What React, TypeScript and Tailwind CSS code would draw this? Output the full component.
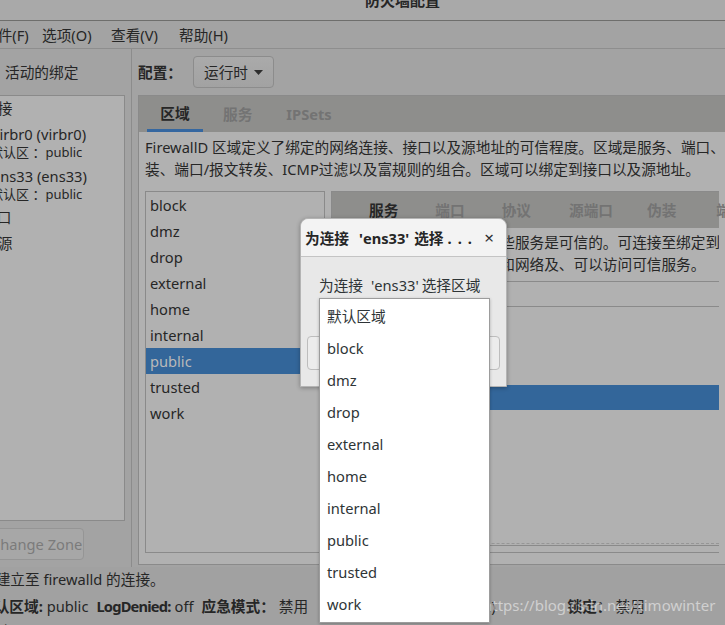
import React from 'react';

const zones = ['block', 'dmz', 'drop', 'external', 'home', 'internal', 'public', 'trusted', 'work'];
const popupItems = ['默认区域', ...zones];
const subTabs = [
  { label: '服务', active: true, ml: 'ml-[26px]' },
  { label: '端口', active: false, ml: 'ml-[37px]' },
  { label: '协议', active: false, ml: 'ml-[37px]' },
  { label: '源端口', active: false, ml: 'ml-[38px]' },
  { label: '伪装', active: false, ml: 'ml-[34px]' },
  { label: '端口转发', active: false, ml: 'ml-[40px]' },
];

export default function App() {
  return (
    <div className="relative w-[725px] h-[625px] overflow-hidden bg-[#a3a3a3] text-[#262626] text-[14.67px] font-['Noto_Sans','Noto_Sans_CJK_SC',sans-serif]">
      {/* title bar */}
      <div className="h-[41px] -mt-[20px] bg-[#a9a9a9] border-b border-[#6e6e6c] flex items-center pl-[365px] font-bold text-[15px]">
        防火墙配置
      </div>

      {/* menu bar */}
      <div className="h-[28px] border-b border-[#8e8e8e] flex items-center whitespace-nowrap">
        <span className="-ml-[17px] w-[59px] shrink-0">文件(F)</span>
        <span className="w-[69px] shrink-0">选项(O)</span>
        <span className="w-[68px] shrink-0">查看(V)</span>
        <span>帮助(H)</span>
      </div>

      {/* main */}
      <div className="flex h-[518px]">
        {/* bindings */}
        <div className="w-[132px] shrink-0 border-r border-[#8c8c8c] flex flex-col">
          <div className="h-[46px] flex items-center pl-[5px]">活动的绑定</div>
          <div className="h-[426px] mr-[6px] border-t border-b border-r border-[#8a8a8a] bg-[#b1b1b1] overflow-hidden whitespace-nowrap">
            <div className="h-[24px] flex items-center -ml-[17px]">连接</div>
            <div className="h-[20px] mt-[4px] flex items-center -ml-[8px]">virbr0 (virbr0)</div>
            <div className="h-[18px] flex items-center -ml-[10px] text-[13px]">默认区 ：public</div>
            <div className="h-[20px] mt-[4px] flex items-center -ml-[8px]">ens33 (ens33)</div>
            <div className="h-[18px] flex items-center -ml-[10px] text-[13px]">默认区 ：public</div>
            <div className="h-[22px] mt-[2px] flex items-center -ml-[18px]">接口</div>
            <div className="h-[22px] mt-[4px] flex items-center -ml-[17px]">来源</div>
          </div>
          <div className="mt-[7px] -ml-[22px] h-[32px] w-[106px] border border-[#959595] rounded-[4px] bg-[#a7a7a7] text-[#7b7b7b] flex items-center pl-[12px] whitespace-nowrap">
            Change Zone
          </div>
        </div>

        {/* configuration */}
        <div className="flex-1 flex flex-col pl-[6px] min-w-0">
          <div className="h-[46px] flex items-center">
            <span className="font-bold">配置：</span>
            <div className="ml-[11px] h-[32px] w-[81px] border border-[#8c8c8c] rounded-[4px] bg-gradient-to-b from-[#aaaaaa] to-[#a2a2a2] flex items-center pl-[10px] gap-[6px]">
              <span>运行时</span>
              <svg width="9" height="5" viewBox="0 0 9 5"><path d="M0 0h9L4.5 5z" fill="#2e2e2e" /></svg>
            </div>
          </div>

          <div className="h-[470px] border border-r-0 border-[#8a8a8a] flex flex-col">
            {/* tabs */}
            <div className="h-[36px] shrink-0 bg-[#8e8e8c] flex pl-[8px] font-bold">
              <div className="w-[56px] flex items-center justify-center border-b-[3px] border-[#3567a0]">区域</div>
              <div className="ml-[20px] flex items-center text-[#737373]">服务</div>
              <div className="ml-[34px] flex items-center text-[#737373]">IPSets</div>
            </div>

            <div className="flex-1 bg-[#b1b1b1] px-[6px] flex flex-col min-h-0">
              <div className="h-[59px] pt-[4px] leading-[22px] whitespace-nowrap overflow-hidden">
                <div>FirewallD 区域定义了绑定的网络连接、接口以及源地址的可信程度。区域是服务、端口、协议、伪</div>
                <div>装、端口/报文转发、ICMP过滤以及富规则的组合。区域可以绑定到接口以及源地址。</div>
              </div>

              <div className="flex gap-[6px] h-[362px]">
                {/* zone list */}
                <div className="w-[180px] shrink-0 border border-[#8a8a8a] bg-[#b1b1b1]">
                  {zones.map((z) => (
                    <div
                      key={z}
                      className={
                        z === 'public'
                          ? 'h-[26px] flex items-center pl-[4px] bg-[#33669a] text-[#b9b9b9]'
                          : 'h-[26px] flex items-center pl-[4px]'
                      }
                    >
                      {z}
                    </div>
                  ))}
                </div>

                {/* zone details */}
                <div className="flex-1 min-w-0 border border-r-0 border-[#8a8a8a] flex flex-col">
                  <div className="h-[36px] shrink-0 bg-[#8e8e8c] flex items-center pl-[11px] font-bold whitespace-nowrap">
                    <svg width="6" height="10" viewBox="0 0 6 10"><path d="M6 0v10L0 5z" fill="#6a6a6a" /></svg>
                    {subTabs.map((t) => (
                      <span key={t.label} className={`${t.ml} ${t.active ? 'text-[#262626]' : 'text-[#737373]'}`}>
                        {t.label}
                      </span>
                    ))}
                  </div>
                  <div className="pt-[3px] pb-[6px] pl-[7px] leading-[22px] whitespace-nowrap overflow-hidden border-b border-[#8a8a8a]">
                    <div>可以在此处定义区域中哪些服务是可信的。可连接至绑定到该区域的连接</div>
                    <div>的连接、接口、源的主机和网络及、可以访问可信服务。</div>
                  </div>
                  <div className="h-[25px] border-b border-[#8a8a8a]" />
                  <div className="h-[78px]" />
                  <div className="h-[25px] bg-[#33669a]" />
                  <div className="flex-1" />
                  <div className="border-t border-dashed border-[#969696]" />
                  <div className="mt-[1px] h-[7px] border-t border-[#8a8a8a]" />
                </div>
              </div>
            </div>
          </div>
        </div>
      </div>

      {/* status bar */}
      <div className="bg-[#a1a1a1] whitespace-nowrap">
        <div className="h-[24px] flex items-center -ml-[19px]">已建立至 firewalld 的连接。</div>
        <div className="h-[24px] mt-[3px] flex items-center -ml-[20px]">
          <span className="font-bold">默认区域:</span>
          <span className="ml-[4px]">public</span>
          <span className="ml-[8px] font-bold tracking-[-0.8px]">LogDenied:</span>
          <span className="ml-[4px]">off</span>
          <span className="ml-[8px] font-bold">应急模式：</span>
          <span className="ml-[4px]">禁用</span>
          <span className="ml-[12px] font-bold">自动帮助程序:</span>
          <span className="ml-[4px]">system (on)</span>
          <span className="ml-[72px] font-bold">锁定：</span>
          <span className="ml-[4px]">禁用</span>
        </div>
        <div className="h-[24px] mt-[1px] flex items-center -ml-[4px]">端口 2, 20b0/udp</div>
      </div>

      {/* watermark */}
      <div className="absolute left-[483px] top-[594px] text-[15px] text-white/50 whitespace-nowrap">
        https://blog.csdn.net/kimowinter
      </div>

      {/* dialog */}
      <div className="absolute left-[300px] top-[218px] w-[207px] h-[169px] rounded-t-[8px] border border-[#b4b4b4] bg-[#e8e8e8] shadow-[0_1px_4px_rgba(0,0,0,0.3)]">
        <div className="h-[38px] rounded-t-[8px] bg-[#f3f3f3] border-b border-[#c4c4c4] flex items-center pl-[4px] pr-[12px] font-bold whitespace-nowrap">
          <span>
            为连接<span className="ml-[10px]">'ens33'</span>
            <span className="ml-[5px]">选择</span>
            <span className="ml-[4px] tracking-[6px]">...</span>
          </span>
          <span className="ml-auto text-[17px] font-normal text-[#2e2e2e]">×</span>
        </div>
        <div className="pt-[17px] pl-[18px] leading-[22px] whitespace-nowrap text-[#2e3436]">
          为连接<span className="ml-[8px]">'ens33'</span>
          <span className="ml-[3px]">选择区域</span>
        </div>
        <div className="mx-[6px] mt-[40px] h-[34px] rounded-[4px] border border-[#bdbdbd] bg-[#ececec]" />
      </div>

      {/* popup list */}
      <div className="absolute left-[319px] top-[298px] w-[171px] h-[325px] bg-white border border-[#9c9c9c] shadow-[0_1px_3px_rgba(0,0,0,0.25)] pt-[1px] text-[#2e3436]">
        {popupItems.map((p) => (
          <div key={p} className="h-[32px] flex items-center pl-[7px]">
            {p}
          </div>
        ))}
      </div>
    </div>
  );
}
